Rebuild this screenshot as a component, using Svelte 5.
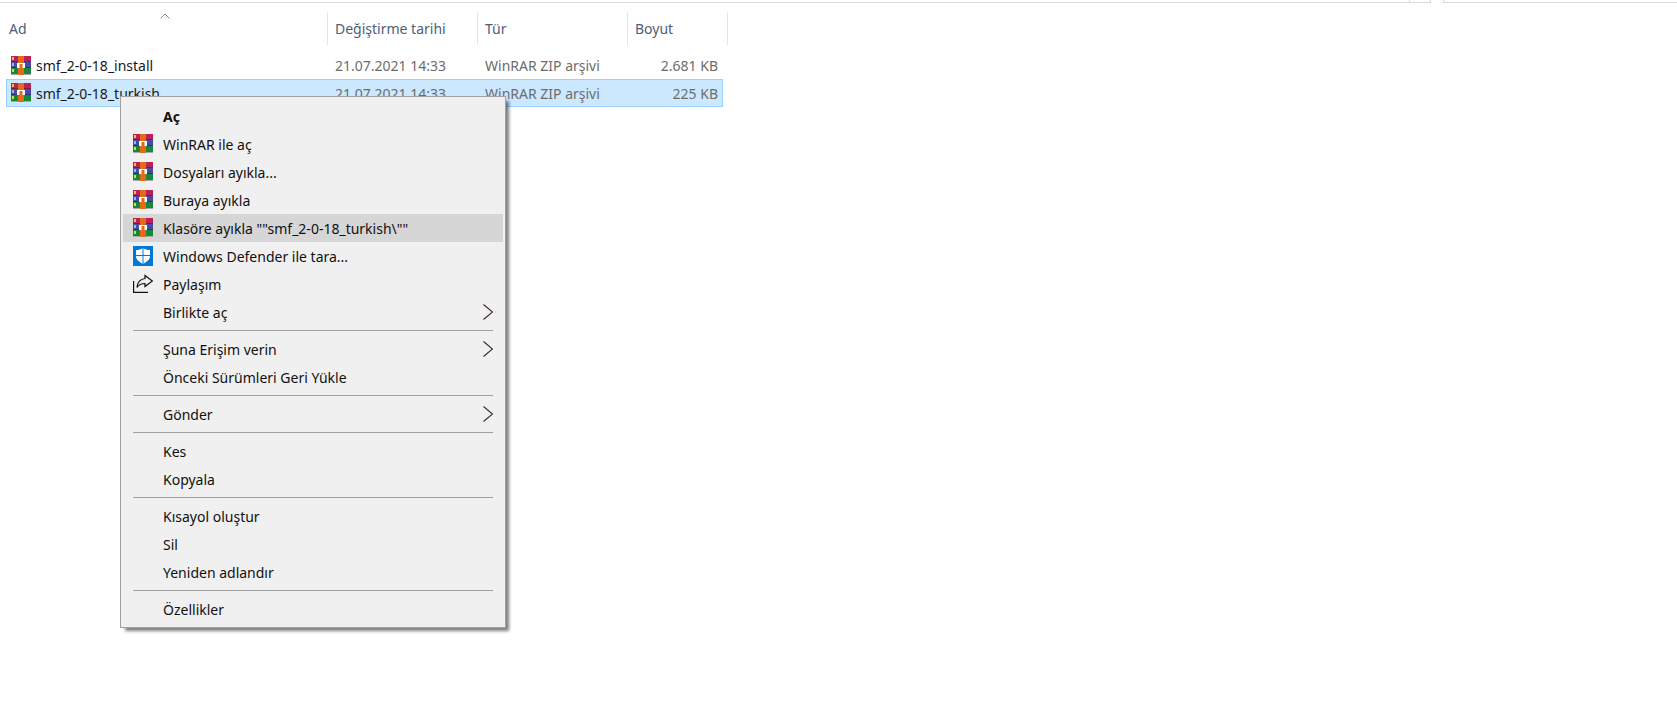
<script>
  const files = [
    { name: 'smf_2-0-18_install', date: '21.07.2021 14:33', type: 'WinRAR ZIP arşivi', size: '2.681 KB' },
    { name: 'smf_2-0-18_turkish', date: '21.07.2021 14:33', type: 'WinRAR ZIP arşivi', size: '225 KB', selected: true }
  ];

  const columns = ['Ad', 'Değiştirme tarihi', 'Tür', 'Boyut'];

  const menu = [
    [
      { label: 'Aç', bold: true },
      { label: 'WinRAR ile aç', icon: 'rar' },
      { label: 'Dosyaları ayıkla...', icon: 'rar' },
      { label: 'Buraya ayıkla', icon: 'rar' },
      { label: 'Klasöre ayıkla ""smf_2-0-18_turkish\\""', icon: 'rar', hover: true },
      { label: 'Windows Defender ile tara...', icon: 'defender' },
      { label: 'Paylaşım', icon: 'share' },
      { label: 'Birlikte aç', arrow: true }
    ],
    [
      { label: 'Şuna Erişim verin', arrow: true },
      { label: 'Önceki Sürümleri Geri Yükle' }
    ],
    [{ label: 'Gönder', arrow: true }],
    [{ label: 'Kes' }, { label: 'Kopyala' }],
    [{ label: 'Kısayol oluştur' }, { label: 'Sil' }, { label: 'Yeniden adlandır' }],
    [{ label: 'Özellikler' }]
  ];
</script>

{#snippet rar()}
  <svg class="icon" width="20" height="20" viewBox="0 0 20 20">
    <rect x="0" y="0" width="20" height="6" fill="#bb2058" />
    <rect x="0" y="6" width="20" height="6" fill="#4a4aa4" />
    <rect x="0" y="12" width="20" height="6" fill="#17883a" />
    <rect x="0" y="5" width="20" height="1" fill="#7a1a48" />
    <rect x="0" y="11" width="20" height="1" fill="#2f2f78" />
    <rect x="0" y="18" width="20" height="1" fill="#a8a8a8" />
    <rect x="1" y="1" width="2" height="3" fill="#f0c040" />
    <rect x="1" y="7" width="2" height="3" fill="#80c0f0" />
    <rect x="1" y="13" width="2" height="3" fill="#c8e040" />
    <rect x="7" y="0" width="6" height="19" fill="#e26a18" />
    <rect x="6" y="7" width="8" height="5" fill="#fff" />
    <rect x="8.500" y="8" width="3" height="4" fill="#e26a18" />
  </svg>
{/snippet}

{#snippet defender()}
  <svg class="icon" width="20" height="20" viewBox="0 0 20 20">
    <rect width="20" height="20" fill="#0078d7" />
    <path d="M10 2c2 1.500 4.500 2 7 2v6.500c0 3-3.500 5.500-7 7.500-3.500-2-7-4.500-7-7.500V4c2.500 0 5-.5 7-2z" fill="#fff" />
    <path d="M10 2v16M3 9.500h14" stroke="#0078d7" stroke-width="1" fill="none" />
  </svg>
{/snippet}

{#snippet share()}
  <svg class="icon" width="20" height="20" viewBox="0 0 20 20" fill="none" stroke="#111" stroke-width="1.2">
    <path d="M.6 7v11.400h14.400" />
    <path d="M12 1.500l7.400 5.500-7.400 5.500v-3c-3.500 0-6 1-8 4 .5-5 3.500-8.500 8-9z" />
  </svg>
{/snippet}

<main class="page">
  <div class="topbar">
    <div class="seg first"><span class="tick"></span></div>
    <div class="seg last"></div>
  </div>

  <div class="list">
    <div class="head">
      <svg class="sort" width="10" height="6" viewBox="0 0 10 6" fill="none" stroke="#8a8a8a">
        <path d="M.5 5.500L5 1l4.500 4.500" />
      </svg>
      {#each columns as col}
        <div class="col">{col}</div>
      {/each}
    </div>

    <div class="rows">
      {#each files as f}
        <div class="row" class:selected={f.selected}>
          <div class="name">
            {@render rar()}
            <span>{f.name}</span>
          </div>
          <div class="cell">{f.date}</div>
          <div class="cell">{f.type}</div>
          <div class="cell size">{f.size}</div>
        </div>
      {/each}
    </div>
  </div>

  <div class="menu">
    {#each menu as group, i}
      {#if i > 0}
        <div class="sep"></div>
      {/if}
      {#each group as item}
        <div class="item" class:hover={item.hover} class:bold={item.bold}>
          <div class="slot">
            {#if item.icon === 'rar'}
              {@render rar()}
            {:else if item.icon === 'defender'}
              {@render defender()}
            {:else if item.icon === 'share'}
              {@render share()}
            {/if}
          </div>
          <span class="label">{item.label}</span>
          {#if item.arrow}
            <svg class="arrow" width="10" height="16" viewBox="0 0 10 16" fill="none" stroke="#3a2a2a" stroke-width="1.1">
              <path d="M.5 .5L9.500 8 .5 15.500" />
            </svg>
          {/if}
        </div>
      {/each}
    {/each}
  </div>
</main>

<style>
  :global(body) {
    margin: 0;
    background: #fff;
  }

  .page {
    position: relative;
    width: 1677px;
    height: 713px;
    overflow: hidden;
    font-family: 'Noto Sans', 'Open Sans', sans-serif;
    font-size: 14px;
  }

  .topbar {
    display: flex;
    height: 3px;
  }

  .seg {
    box-sizing: border-box;
    height: 3px;
    border-bottom: 1px solid #d9d9d9;
    position: relative;
  }

  .first {
    width: 1431px;
    border-right: 1px solid #d9d9d9;
  }

  .tick {
    position: absolute;
    left: 1409px;
    top: 0;
    height: 3px;
    border-left: 1px solid #d9d9d9;
  }

  .last {
    margin-left: 12px;
    flex: 1;
    border-left: 1px solid #d9d9d9;
  }

  .head {
    position: relative;
    display: grid;
    grid-template-columns: 328px 150px 150px 100px;
    width: 728px;
    margin-top: 9px;
    height: 32px;
  }

  .sort {
    position: absolute;
    left: 160px;
    top: 1px;
  }

  .col {
    box-sizing: border-box;
    padding: 1px 0 0 7px;
    line-height: 32px;
    border-right: 1px solid #e5e5e5;
    color: #4c607a;
  }

  .col:first-of-type {
    padding-left: 9px;
  }

  .rows {
    margin-top: 8px;
    margin-left: 6px;
    width: 717px;
  }

  .row {
    box-sizing: border-box;
    display: grid;
    grid-template-columns: 322px 150px 150px 95px;
    align-items: center;
    height: 27px;
    border: 1px solid transparent;
    color: #6d6d6d;
  }

  .row.selected {
    height: 28px;
    background: #cce8ff;
    border-color: #99d1ff;
  }

  .name {
    display: flex;
    align-items: center;
    gap: 5px;
    padding-left: 4px;
    color: #1a1a1a;
  }

  .cell {
    padding-left: 6px;
  }

  .size {
    text-align: right;
    padding-right: 6px;
  }

  .menu {
    position: absolute;
    left: 120px;
    top: 96px;
    box-sizing: border-box;
    width: 386px;
    height: 532px;
    padding: 5px 2px;
    background: #f0f0f0;
    border: 1px solid #a0a0a0;
    box-shadow: 4px 4px 3px -1px rgba(0, 0, 0, 0.5);
    color: #111;
  }

  .item {
    display: flex;
    align-items: center;
    height: 28px;
    position: relative;
  }

  .item.hover {
    background: #d6d6d6;
  }

  .item.bold .label {
    font-weight: 700;
  }

  .slot {
    width: 40px;
    padding-left: 10px;
    box-sizing: border-box;
    display: flex;
    align-items: center;
  }

  .icon {
    flex: none;
    display: block;
  }

  .arrow {
    position: absolute;
    left: 360px;
    top: 6px;
  }

  .sep {
    height: 1px;
    margin: 4px 10px;
    background: #a0a0a0;
  }
</style>
